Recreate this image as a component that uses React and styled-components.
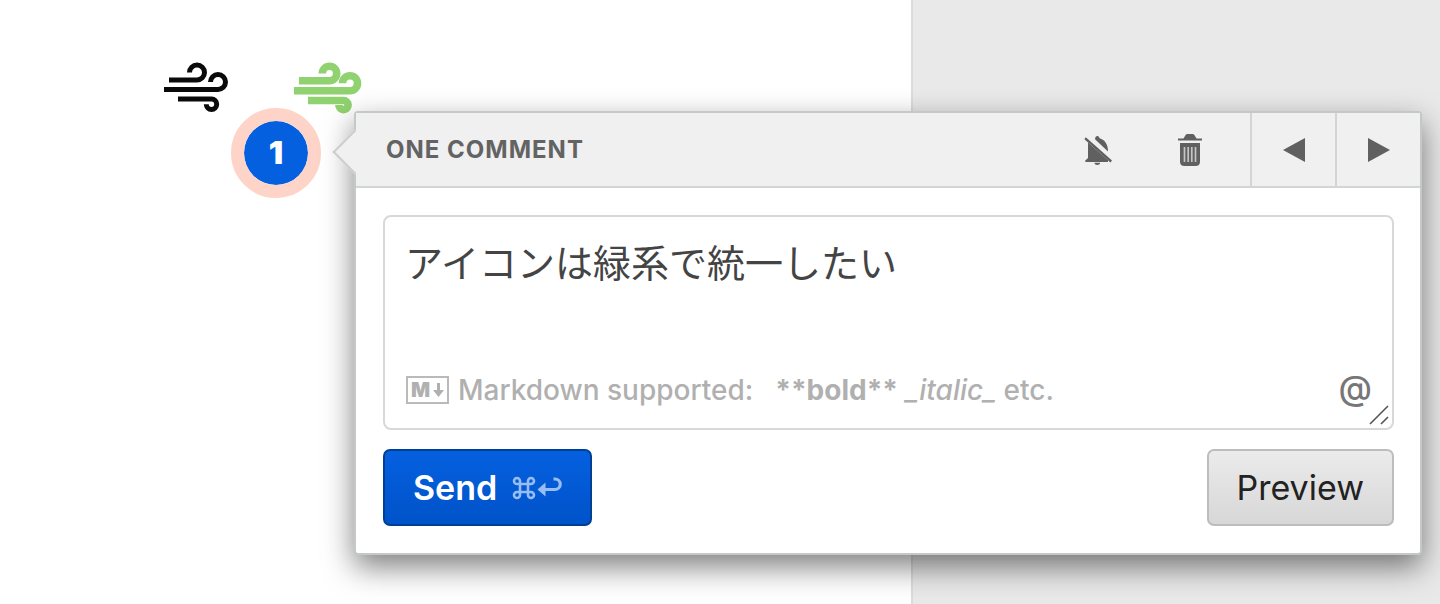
import React from "react";
import styled, { createGlobalStyle, css } from "styled-components";

const GlobalStyle = createGlobalStyle`
  *, *::before, *::after { box-sizing: border-box; }
  body {
    margin: 0;
    background: #fff;
    font-family: Inter, "Noto Sans CJK JP", sans-serif;
    color: #222;
  }
  button, textarea { font-family: inherit; margin: 0; }
`;

const Page = styled.main`
  position: relative;
  display: flex;
  min-height: 100vh;
`;

const Artboard = styled.section`
  flex: 912;
  background: #fff;
`;

const Gutter = styled.aside`
  flex: 527;
  background: #e9e9e9;
  border-left: 2px solid #dcdcdc;
`;

const WindIcon = styled.svg`
  position: absolute;
  top: 60px;
  left: ${(p) => p.$left}px;
  width: 74px;
  height: 56px;
  fill: none;
  stroke: ${(p) => p.$color};
  stroke-width: ${(p) => p.$weight};
`;

const Pin = styled.button`
  position: absolute;
  top: 108px;
  left: 231px;
  width: 90px;
  height: 90px;
  padding: 0;
  border: 13px solid #ffd4c8;
  border-radius: 50%;
  background: #0560e0;
  background-clip: padding-box;
  color: #fff;
  font-size: 32px;
  font-weight: 900;
  line-height: 64px;
`;

const Popover = styled.section`
  position: absolute;
  top: 111px;
  left: 354px;
  right: 18px;
  border: 2px solid #c4c8c7;
  border-radius: 4px;
  background: #fff;
  box-shadow: 0 12px 30px rgba(0, 0, 0, 0.5);

  &::before {
    content: "";
    position: absolute;
    top: 23px;
    left: -17px;
    width: 32px;
    height: 32px;
    border: solid #cbcecd;
    border-width: 0 0 2px 2px;
    background: #f0f0f0;
    transform: rotate(45deg);
  }
`;

const Header = styled.header`
  position: relative;
  display: flex;
  height: 75px;
  border-bottom: 2px solid #d3d5d4;
  background: #f0f0f0;
`;

const Title = styled.h2`
  flex: 1;
  margin: 0;
  padding-left: 30px;
  color: #636363;
  font-size: 24px;
  font-weight: 700;
  line-height: 74px;
  letter-spacing: 1px;
`;

const HeaderButton = styled.button`
  display: flex;
  align-items: center;
  justify-content: center;
  width: ${(p) => (p.$divided ? 85 : 92)}px;
  padding: 0;
  border: 0;
  background: none;
  color: #606060;
  ${(p) => p.$divided && css`border-left: 2px solid #d3d5d4;`}
`;

const Actions = styled.div`
  display: flex;
  padding-right: 14px;
`;

const Body = styled.form`
  padding: 27px 26px 27px 27px;
`;

const Editor = styled.div`
  position: relative;
  height: 215px;
  display: flex;
  flex-direction: column;
  border: 2px solid #d8d8d8;
  border-radius: 8px;
  background: #fff;
`;

const Field = styled.textarea`
  flex: 1;
  min-height: 0;
  padding: 16px 20px 0;
  border: 0;
  outline: 0;
  resize: none;
  overflow: hidden;
  background: none;
  color: #444;
  font-family: "Noto Sans CJK JP", sans-serif;
  font-size: 38px;
  line-height: 56px;
`;

const Hint = styled.div`
  display: flex;
  align-items: center;
  height: 36px;
  margin: 0 20px 20px 21px;
  color: #b0b0b0;
  font-size: 28px;
  font-weight: 500;
  line-height: 36px;
  white-space: pre;
`;

const HintLabel = styled.span`
  margin-left: 9px;
`;

const Sample = styled.span`
  margin-left: 22px;
`;

const MarkdownBadge = styled.span`
  display: flex;
  align-items: center;
  justify-content: center;
  gap: 3px;
  width: 43px;
  height: 28px;
  border: 2px solid #bababa;
  font-size: 20px;
  font-weight: 900;
  line-height: 24px;
`;

const Mention = styled.button`
  align-self: flex-start;
  height: 32px;
  margin-left: auto;
  padding: 0;
  border: 0;
  background: none;
  color: #777;
  font-size: 34px;
  font-weight: 500;
  line-height: 28px;
`;

const Grip = styled.svg`
  position: absolute;
  right: 3px;
  bottom: 3px;
`;

const Footer = styled.div`
  display: flex;
  justify-content: space-between;
  margin-top: 19px;
`;

const Button = styled.button`
  display: flex;
  align-items: center;
  height: 77px;
  padding: 0 28px;
  border: 2px solid #bdbdbd;
  border-radius: 7px;
  background: linear-gradient(#ebebeb, #d7d7d7);
  color: #222;
  font-size: 34px;
  font-weight: 400;
  ${(p) => p.$primary && css`
    border-color: #003f96;
    background: linear-gradient(#0560e0, #0053c9);
    color: #fff;
    font-weight: 600;
  `}
`;

const Shortcut = styled.svg`
  margin-left: 15px;
`;

function Wind({ paths, ...rest }) {
  return (
    <WindIcon viewBox="0 0 74 56" aria-hidden="true" {...rest}>
      {paths.map((d) => <path key={d} d={d} />)}
    </WindIcon>
  );
}

const thinWind = [
  "M9 20H37A7.5 7.5 0 1 0 29.5 12.5",
  "M4 29.5H58A7.5 7.5 0 1 0 50.5 22",
  "M18 39H51.5A5.2 5.2 0 1 1 46.3 44.2",
];
const thickWind = [
  "M9 20.7H39.5A7.2 7.2 0 1 0 32.3 13.5",
  "M4 30.7H60A7.5 7.5 0 1 0 52.5 23.2",
  "M18 40.5H53.5A4.6 4.6 0 1 1 48.9 45.1",
];

export default function App() {
  return (
    <>
      <GlobalStyle />
      <Page>
        <Artboard />
        <Gutter />
        <Wind $left={160} $color="#0a0a0a" $weight={5} paths={thinWind} />
        <Wind $left={290} $color="#90d26f" $weight={7.6} paths={thickWind} />
        <Pin type="button">1</Pin>
        <Popover>
          <Header>
            <Title>ONE COMMENT</Title>
            <Actions>
              <HeaderButton type="button" aria-label="Mute">
                <svg width="28" height="30" viewBox="0 0 28 30" fill="currentColor">
                  <path d="M1.8 2.2 28 25.4 26.400 27.400.4 4.300z" />
                  <path d="M4 7.500 24 25.200v1.800H1.300v-1.500l2.700-2.500z" />
                  <path d="M11 4.200C11.200 2 12.200 1 13.200 1c1.300 0 2 .8 2.300 2.300 5.600 1.600 8.600 6.500 8.500 13.200z" />
                  <path d="M10.400 27.800h5.800c-.3 1.400-1.300 2.200-2.900 2.200s-2.600-.8-2.900-2.200z" />
                </svg>
              </HeaderButton>
              <HeaderButton type="button" aria-label="Delete">
                <svg width="24" height="34" viewBox="0 0 24 34" fill="currentColor">
                  <path d="M0 5.400h5.500L7.600 2C8 1.300 8.600 1 9.400 1h5.200c.8 0 1.400.3 1.800 1l2.100 3.400H24v2.100H0z" />
                  <path d="M2 10h20v18.500q0 4.500-4.500 4.500h-11Q2 33 2 28.500z" />
                  <path d="M6.500 14v15M10.200 14v15M13.800 14v15M17.500 14v15" stroke="#c4c4c4" strokeWidth="1.700" />
                </svg>
              </HeaderButton>
            </Actions>
            <HeaderButton type="button" $divided aria-label="Previous">
              <svg width="22" height="24" fill="currentColor"><path d="M22 0v24L0 12z" /></svg>
            </HeaderButton>
            <HeaderButton type="button" $divided aria-label="Next">
              <svg width="22" height="24" fill="currentColor"><path d="M0 0v24l22-12z" /></svg>
            </HeaderButton>
          </Header>
          <Body onSubmit={(e) => e.preventDefault()}>
            <Editor>
              <Field aria-label="Comment" defaultValue="アイコンは緑系で統一したい" />
              <Hint>
                <MarkdownBadge>
                  M
                  <svg width="11" height="15" fill="currentColor">
                    <path d="M4 0h3v7h4L5.500 14 0 7h4z" />
                  </svg>
                </MarkdownBadge>
                <HintLabel>Markdown supported:</HintLabel>
                <Sample><b>**bold**</b> <i>_italic_</i> etc.</Sample>
                <Mention type="button" aria-label="Mention">@</Mention>
              </Hint>
              <Grip width="20" height="20" stroke="#555" strokeWidth="1.600" aria-hidden="true">
                <path d="M1 19 19 1M12 19l7-7" />
              </Grip>
            </Editor>
            <Footer>
              <Button type="submit" $primary>
                Send
                <Shortcut width="50" height="26" viewBox="0 0 50 26" fill="none" stroke="#97bdf3" strokeWidth="2.600" aria-label="Command Return">
                  <path d="M8 6v14a3 3 0 1 1-3-3h14a3 3 0 1 1-3 3v-14a3 3 0 1 1 3 3h-14a3 3 0 1 1 3-3z" />
                  <path d="M32 14.500H43a4.800 4.800 0 0 0 0-10.500H41.500" strokeWidth="3.200" />
                  <path d="M25.500 14.500 33.500 7.500v14z" fill="#97bdf3" stroke="none" />
                </Shortcut>
              </Button>
              <Button type="button">Preview</Button>
            </Footer>
          </Body>
        </Popover>
      </Page>
    </>
  );
}
